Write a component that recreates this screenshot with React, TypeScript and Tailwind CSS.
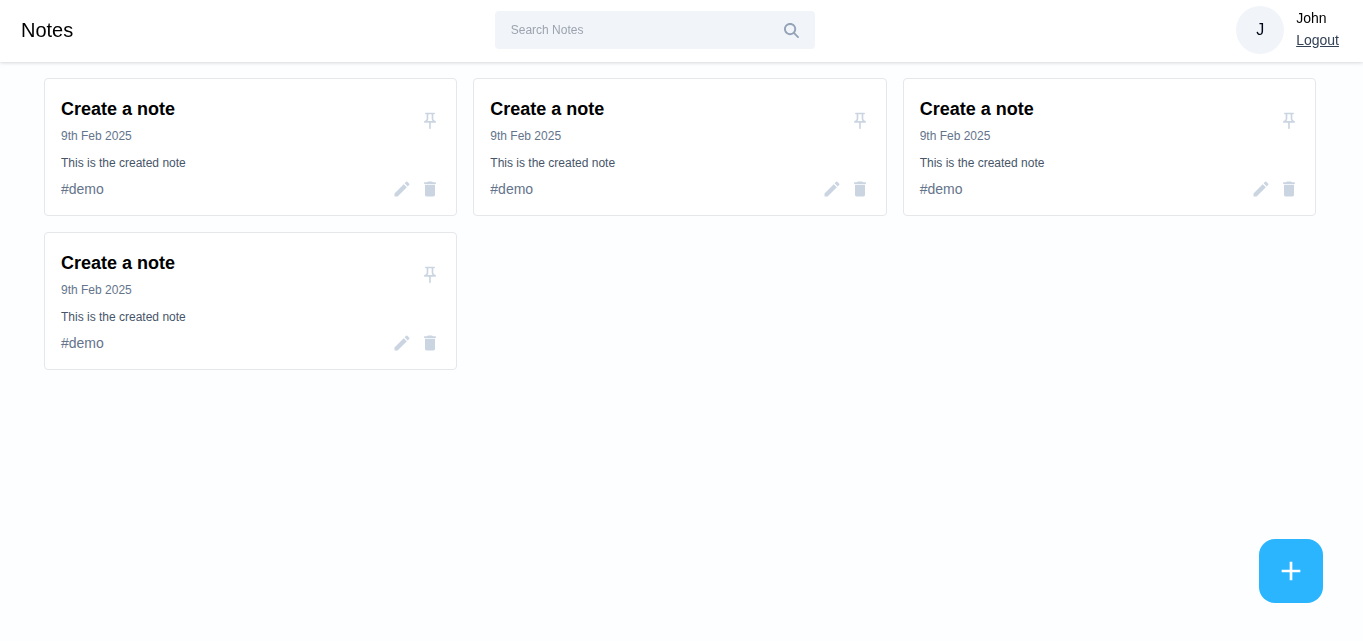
import { useState } from "react";
import { MdAdd, MdCreate, MdDelete, MdOutlinePushPin } from "react-icons/md";
import { FaMagnifyingGlass } from "react-icons/fa6";

type Note = { id: number; title: string; date: string; content: string; tag: string };

const notes: Note[] = [1, 2, 3, 4].map((id) => ({
  id,
  title: "Create a note",
  date: "9th Feb 2025",
  content: "This is the created note",
  tag: "#demo",
}));

function Navbar() {
  const [query, setQuery] = useState("");
  return (
    <header className="flex items-center justify-between bg-white pt-1.5 pr-6 pb-2 pl-[21px] drop-shadow">
      <h1 className="py-2 text-xl font-medium text-black">Notes</h1>
      <form className="flex w-80 items-center rounded-sm bg-[#f1f5f9] px-4" onSubmit={(e) => e.preventDefault()}>
        <input
          type="text"
          aria-label="Search Notes"
          placeholder="Search Notes"
          value={query}
          onChange={(e) => setQuery(e.target.value)}
          className="w-full bg-transparent py-[11px] text-xs outline-none placeholder:text-[#9ca3af]"
        />
        <button type="submit" aria-label="Search" className="cursor-pointer text-[#94a3b8]">
          <FaMagnifyingGlass className="size-[15px]" />
        </button>
      </form>
      <div className="flex items-center gap-3">
        <div className="flex h-12 w-12 items-center justify-center rounded-full bg-[#f1f5f9] font-medium text-slate-950">J</div>
        <div>
          <p className="text-sm font-medium">John</p>
          <button type="button" className="text-sm text-[#334155] underline">Logout</button>
        </div>
      </div>
    </header>
  );
}

function NoteCard({ note }: { note: Note }) {
  return (
    <article className="rounded border border-[#e5e7eb] bg-white p-4">
      <div className="flex items-center justify-between">
        <div>
          <h2 className="text-lg font-bold text-black">{note.title}</h2>
          <div>
            <span className="text-xs text-[#64748b]">{note.date}</span>
          </div>
        </div>
        <button type="button" aria-label="Pin note" className="text-xl text-[#cbd5e1]">
          <MdOutlinePushPin />
        </button>
      </div>
      <p className="mt-2 text-xs text-[#475569]">{note.content}</p>
      <div className="mt-2 flex items-center justify-between">
        <span className="text-sm text-[#64748b]">{note.tag}</span>
        <div className="flex items-center gap-2 text-xl text-[#cbd5e1]">
          <button type="button" aria-label="Edit note"><MdCreate /></button>
          <button type="button" aria-label="Delete note"><MdDelete /></button>
        </div>
      </div>
    </article>
  );
}

export default function App() {
  return (
    <div className="min-h-screen bg-[#fcfeff] font-['Liberation_Sans',Arial,sans-serif]">
      <Navbar />
      <main className="pt-4 pr-[47px] pl-11">
        <div className="grid grid-cols-3 gap-4">
          {notes.map((note) => <NoteCard key={note.id} note={note} />)}
        </div>
      </main>
      <button type="button" aria-label="Add note" className="fixed right-10 bottom-[38px] flex h-16 w-16 items-center justify-center rounded-2xl bg-[#2bb5ff] text-white">
        <MdAdd className="text-[32px]" />
      </button>
    </div>
  );
}
